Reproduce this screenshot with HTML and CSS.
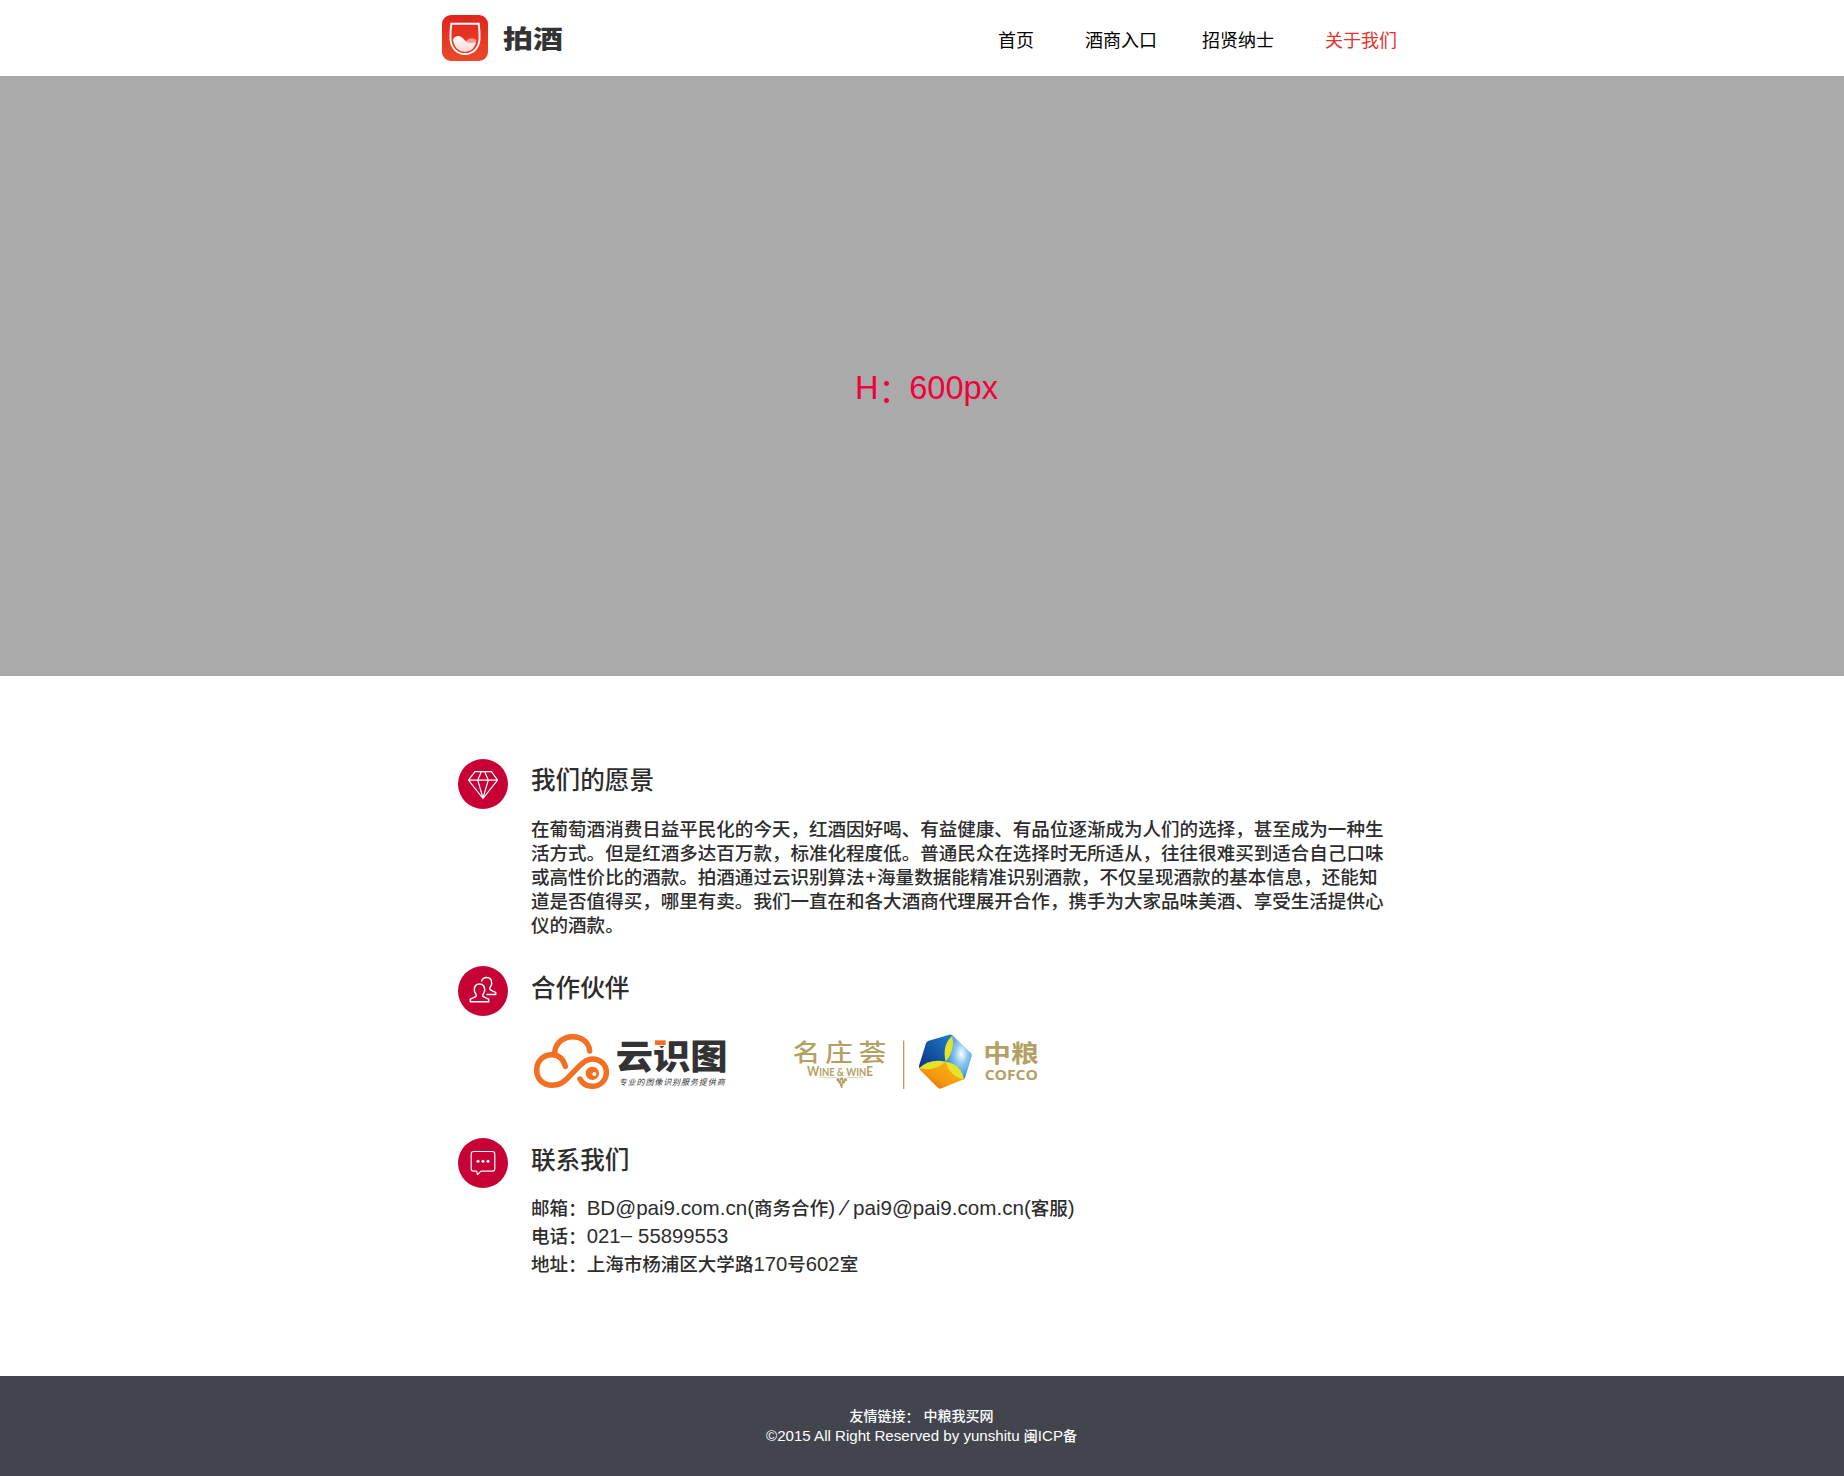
FILE: index.html
```
<!DOCTYPE html>
<html lang="zh-CN">
<head>
<meta charset="utf-8">
<title>拍酒 - 关于我们</title>
<link rel="stylesheet" href="styles.css">
</head>
<body>
<header class="header">
  <a class="brand">
    <svg class="brand-mark" viewBox="0 0 46 46" width="46" height="46">
      <defs><linearGradient id="mark" x1="0" y1="0" x2="0" y2="1"><stop offset="0" stop-color="#e2231c"/><stop offset="1" stop-color="#ea4a2a"/></linearGradient>
      <linearGradient id="wine" x1="0" y1="0" x2="0" y2="1"><stop offset="0" stop-color="#fff"/><stop offset="1" stop-color="#fbd9d3"/></linearGradient></defs>
      <rect width="46" height="46" rx="9" fill="url(#mark)"/>
      <path d="M9.3 8.8h27.4c.8 5 1 9.500.8 15.500C37.200 32.800 31 39 23 39S8.800 32.800 8.500 24.300c-.2-6 0-10.500.8-15.500z" fill="none" stroke="#fff" stroke-width="1.900"/>
      <path d="M24 27c1-4 8-5 10.500-1.500-1 3-6 4-10.500 1.500z" fill="#f59a92"/>
      <path d="M11 24.500c3-5 8-4 11 0 2.500 3.500 6.500 4.500 12 2.500-1 6-5.500 9.800-11 9.800-6.200 0-11.300-5-12-12.300z" fill="url(#wine)"/>
    </svg>
    <span class="brand-name">拍酒</span>
  </a>
  <nav class="nav">
    <a>首页</a><a>酒商入口</a><a>招贤纳士</a><a class="active">关于我们</a>
  </nav>
</header>

<section class="hero"><span>H<span class="colon">：</span>600px</span></section>

<main class="content">
  <section class="block vision">
    <svg class="badge" viewBox="0 0 50 50" width="50" height="50">
      <circle cx="25" cy="25" r="25"/>
      <path d="M17 12.700h16.500l6 8.500L25 39.500 10.500 21.200zM10.500 21.200h29M23.300 12.700L19.700 21.200 25 39l5.300-17.800-3.600-8.500"/>
    </svg>
    <div class="body">
      <h2>我们的愿景</h2>
      <p class="story">在葡萄酒消费日益平民化的今天，红酒因好喝、有益健康、有品位逐渐成为人们的选择，甚至成为一种生<br>活方式。但是红酒多达百万款，标准化程度低。普通民众在选择时无所适从，往往很难买到适合自己口味<br>或高性价比的酒款。拍酒通过云识别算法<span class="plus">+</span>海量数据能精准识别酒款，不仅呈现酒款的基本信息，还能知<br>道是否值得买，哪里有卖。我们一直在和各大酒商代理展开合作，携手为大家品味美酒、享受生活提供心<br>仪的酒款。</p>
    </div>
  </section>

  <section class="block partners">
    <svg class="badge" viewBox="0 0 50 50" width="50" height="50">
      <circle cx="25" cy="25" r="25"/>
      <path class="thick" d="M12.300 35.700v-2.500c2-1.500 5-1.500 6-3.300.5-1.500-2-3-2-6 0-3.800 2.200-5.900 5.200-5.900s5.200 2.100 5.200 5.900c0 3-2.500 4.500-2 6 1 1.800 4 1.800 6 3.300v2.500zM23.500 15.500c.6-2.600 2.600-4 5-4 3 0 5.200 2.100 5.200 5.700 0 3-2.500 4.500-2 6 1 1.800 4 1.800 6 3.300v2H28.500"/>
    </svg>
    <div class="body">
      <h2>合作伙伴</h2>
      <div class="logos">
        <svg viewBox="270 240 600 192" width="200" height="64">
          <g fill="none" stroke="#f37022" stroke-width="16.500" stroke-linecap="round">
            <path d="M344 308C346 280 369 260 398 260C425 260 447 277 449 303"/>
            <path d="M376 349C370 327 355 314 335 314C309 314 290 334 290 360C290 387 309 406 336 406C362 406 375 393 390 377L417 349C430 336 441 327 457 327C481 327 499 344 499 367C499 391 481 409 457 409C440 409 427 401 420 387"/>
          </g>
          <circle cx="457" cy="370" r="20" fill="#f37022"/><circle cx="463" cy="372" r="6" fill="#fff"/>
          <text class="yst-name" transform="translate(527 358) scale(1.080 1.070)" textLength="311" lengthAdjust="spacingAndGlyphs">云识图</text>
          <path d="M641 258h37v30h-37z" fill="#fff"/>
          <rect x="645" y="271" width="32" height="14" fill="#f37022"/>
          <text class="yst-tag" x="536" y="406" textLength="318">专业的图像识别服务提供商</text>
        </svg>
        <svg viewBox="66 60 750 186" width="250" height="62">
          <defs>
            <linearGradient id="blue" x1="0" y1="1" x2="1" y2="0"><stop offset="0" stop-color="#0c2f86"/><stop offset=".6" stop-color="#1660ad"/><stop offset="1" stop-color="#1d86cf"/></linearGradient>
            <radialGradient id="sky" cx=".6" cy=".42" r=".6"><stop offset="0" stop-color="#fff"/><stop offset=".4" stop-color="#8cc9f0"/><stop offset="1" stop-color="#2b86cf"/></radialGradient>
            <linearGradient id="sun" x1="1" y1="0" x2="0" y2="1"><stop offset="0" stop-color="#fbb818"/><stop offset=".6" stop-color="#f39a10"/><stop offset="1" stop-color="#e5550e"/></linearGradient>
          </defs>
          <g class="gold">
            <g class="mz">
              <text transform="translate(68 152) scale(1.180 1)">名</text>
              <text transform="translate(166 152) scale(1.180 1)">庄</text>
              <text transform="translate(266 152) scale(1.180 1)">荟</text>
            </g>
            <text class="ww" x="111" y="198" textLength="198" lengthAdjust="spacingAndGlyphs"><tspan class="cap">W</tspan>INE &amp; WIN<tspan class="cap">E</tspan></text>
            <path d="M145 201q35 4 55 1M230 202q25 2 50-1" fill="none" stroke="#c9bb8c" stroke-width="2"/>
            <circle cx="204" cy="209" r="5"/><circle cx="215" cy="207" r="5"/><circle cx="226" cy="209" r="5"/><circle cx="209" cy="216" r="5"/><circle cx="220" cy="216" r="5"/><circle cx="214" cy="224" r="5"/><circle cx="215" cy="231" r="3"/>
            <rect x="399" y="92" width="4" height="145"/>
            <text class="zl" x="640" y="155" textLength="166" lengthAdjust="spacingAndGlyphs">中粮</text>
            <text class="cofco" x="644" y="209" textLength="160" lengthAdjust="spacingAndGlyphs">COFCO</text>
          </g>
          <path d="M527 155L448 174Q446 170 448 164L468 100Q470 94 476 92L538 74Q543 73 548 77z" fill="url(#blue)"/>
          <path d="M527 155L547 76L602 128Q607 133 605 139L585 204Q584 207 579 209z" fill="url(#sky)"/>
          <path d="M527 155L582 208L515 235Q508 238 502 232L451 181Q447 177 448 174z" fill="url(#sun)"/>
          <g fill="#e3e32a"><path d="M527 155Q515 105 547 77Q556 120 527 155z"/><path d="M527 155Q480 145 448 174Q490 187 527 155z"/><path d="M527 155Q574 162 582 208Q540 200 527 155z"/></g>
        </svg>
      </div>
    </div>
  </section>

  <section class="block contact">
    <svg class="badge" viewBox="0 0 50 50" width="50" height="50">
      <circle cx="25" cy="25" r="25"/>
      <path d="M15.500 13.500h19q2.300 0 2.300 2.300v15q0 2.300-2.300 2.300H23l-3.500 3.500-.8-3.500h-3.200q-2.300 0-2.300-2.300v-15q0-2.300 2.300-2.300z"/>
      <g class="dots"><circle cx="20" cy="23.300" r="1.500"/><circle cx="25" cy="23.300" r="1.500"/><circle cx="30" cy="23.300" r="1.500"/></g>
    </svg>
    <div class="body">
      <h2>联系我们</h2>
      <div class="lines">
        <p>邮箱<span class="colon">：</span><span class="latin mail">BD@pai9.com.cn(</span>商务合作<span class="latin mail">)<span class="slash">/</span>pai9@pai9.com.cn(</span>客服<span class="latin mail">)</span></p>
        <p>电话<span class="colon">：</span><span class="latin">021<span class="dash">–</span> 55899553</span></p>
        <p>地址<span class="colon">：</span>上海市杨浦区大学路<span class="latin">170</span>号<span class="latin">602</span>室</p>
      </div>
    </div>
  </section>
</main>

<footer class="footer">
  <p>友情链接<span class="colon">：</span> 中粮我买网</p>
  <p><span class="latin">©2015 All Right Reserved by yunshitu </span>闽<span class="latin">ICP</span>备</p>
</footer>
</body>
</html>
```
FILE: styles.css
```
* { box-sizing: border-box; }
body {
  margin: 0;
  background: #fff;
  color: #2d2d2d;
  font-family: "Liberation Sans", "Noto Sans CJK SC", sans-serif;
}
h2, p { margin: 0; font-weight: 400; }
.colon { display: inline-block; transform: translateY(.08em); }

.header {
  display: flex;
  justify-content: space-between;
  height: 76px;
  padding: 0 447px 0 442px;
}
.brand { display: flex; align-items: center; gap: 15px; }
.brand-mark { display: block; }
.brand-name {
  font: 900 27px/46px "Noto Sans CJK SC", sans-serif;
  color: #333;
  transform: scale(1.110, .92);
  transform-origin: 0 50%;
}
.nav { display: flex; align-items: center; padding-top: 1px; font-size: 18px; line-height: 26px; color: #000; }
.nav a { margin-left: 51px; font-family: "Noto Sans CJK SC", sans-serif; font-weight: 400; }
.nav a:nth-child(3) { margin-left: 45px; }
.nav .active { color: #e5322d; }

.hero {
  display: flex;
  align-items: center;
  justify-content: center;
  height: 600px;
  padding: 16px 0 0 9px;
  background: #aaa;
  color: #f0003c;
  font-size: 32.600px;
}
.hero .colon { margin-right: -2px; transform: translateY(.1em); }

.content { height: 700px; padding: 83px 0 0 458px; }
.block { display: flex; gap: 23px; }
.badge { flex: none; fill: #c70035; }
.badge path { fill: none; stroke: #fff; stroke-width: 1.200; stroke-linejoin: round; }
.badge .thick { stroke-width: 1.500; }
.badge .dots { fill: #fff; }
.body h2 { height: 41px; font: 500 24.600px/40px "Noto Sans CJK SC", sans-serif; }
.vision { height: 207px; }
.vision h2 { line-height: 38px; }
.partners { height: 172px; }
.story { padding-top: 16px; font-family: "Noto Sans CJK SC", sans-serif; font-weight: 500; font-size: 18.550px; line-height: 24px; white-space: nowrap; }
.plus { display: inline-block; width: 12.500px; text-align: center; }
.logos { display: flex; gap: 62px; margin: 23px 0 0 -1px; }
.logos svg { display: block; }
.yst-name { font: 900 97px "Noto Sans CJK SC", sans-serif; fill: #333; }
.yst-tag { font: italic 400 24px "Noto Sans CJK SC", sans-serif; fill: #333; }
.gold { fill: #b3a063; }
.mz { font: 500 70px "Noto Sans CJK SC", sans-serif; }
.ww { font: 700 31px Lato, sans-serif; }
.ww .cap { font-size: 38px; }
.zl { font: 700 72px "Noto Sans CJK SC", sans-serif; }
.cofco { font: 700 40px "Open Sans", sans-serif; }
.lines { padding-top: 15px; font-size: 18.550px; font-weight: 500; line-height: 28px; white-space: nowrap; }
.lines p { height: 28px; font-weight: inherit; }
.lines .latin { font-size: 20.300px; font-weight: 400; }
.lines .mail { font-size: 20.600px; }
.slash { display: inline-block; width: 18px; text-align: center; transform: skewX(-20deg); }
.dash { display: inline-block; width: 12px; text-align: center; transform: translateY(-1px); }

.footer {
  height: 100px;
  padding: 31px 1px 0 0;
  background: #42454e;
  color: #fff;
  text-align: center;
  font-size: 14px;
  line-height: 19px;
}
.footer p { height: 19px; font-weight: 500; }
.footer .latin { font-size: 15.100px; font-weight: 400; white-space: pre; }
```
